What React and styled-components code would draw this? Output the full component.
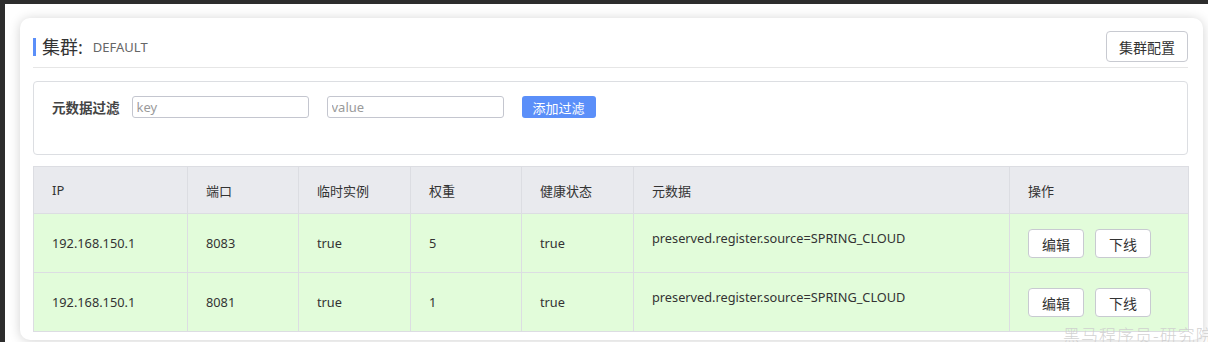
import React from 'react';
import styled, { createGlobalStyle } from 'styled-components';

const GlobalStyle = createGlobalStyle`
  html, body {
    margin: 0;
    padding: 0;
    background: #ffffff;
  }
  body {
    font-family: "Noto Sans", "Noto Sans CJK SC", sans-serif;
    color: #333;
  }
  * {
    box-sizing: border-box;
  }
`;

const instances = [
  { ip: '192.168.150.1', port: 8083, ephemeral: 'true', weight: 5, healthy: 'true', meta: 'preserved.register.source=SPRING_CLOUD' },
  { ip: '192.168.150.1', port: 8081, ephemeral: 'true', weight: 1, healthy: 'true', meta: 'preserved.register.source=SPRING_CLOUD' },
];

const columns = [
  { title: 'IP', width: 154 },
  { title: '端口', width: 111 },
  { title: '临时实例', width: 112 },
  { title: '权重', width: 111 },
  { title: '健康状态', width: 112 },
  { title: '元数据', width: 376 },
  { title: '操作', width: 179 },
];

const Page = styled.div`
  position: relative;
  height: 342px;
  overflow: hidden;
  border-top: 4px solid #2d2d2d;
  border-left: 5px solid #2d2d2d;
  padding: 14px 5px 0 15px;
`;

const Card = styled.div`
  height: 322px;
  background: #fff;
  border-radius: 10px;
  box-shadow: 0 1px 12px rgba(0, 0, 0, 0.18);
  padding: 13px 15px 0 13px;
`;

const Header = styled.div`
  display: flex;
  align-items: center;
  justify-content: space-between;
  padding-bottom: 5px;
  border-bottom: 1px solid #e6e6e6;
`;

const Title = styled.div`
  display: flex;
  align-items: center;
  border-left: 3px solid #5b8ff9;
  padding-left: 6px;
  height: 18px;
`;

const TitleMain = styled.span`
  font-size: 18px;
  line-height: 18px;
  color: #333;
`;

const TitleSub = styled.span`
  font-size: 13px;
  color: #666;
  margin-left: 10px;
`;

const Button = styled.button`
  height: ${(p) => p.$h || 29}px;
  width: ${(p) => p.$w || 56}px;
  padding: 0;
  background: #fff;
  border: 1px solid #c8cad1;
  border-radius: 4px;
  font-family: "Noto Sans", "Noto Sans CJK SC", sans-serif;
  font-size: 14px;
  color: #333;
  cursor: pointer;
`;

const FilterBox = styled.div`
  margin-top: 13px;
  height: 74px;
  border: 1px solid #dcdee2;
  border-radius: 4px;
  padding: 14px 0 0 18px;
`;

const FilterRow = styled.div`
  display: flex;
  align-items: center;
  height: 22px;
`;

const FilterLabel = styled.span`
  font-size: 13.5px;
  font-weight: bold;
  color: #444;
  margin-right: 12px;
`;

const Input = styled.input`
  width: 177px;
  height: 22px;
  border: 1px solid #c4c6cf;
  border-radius: 3px;
  padding: 0 4px;
  margin-right: 18px;
  font-family: "Noto Sans", "Noto Sans CJK SC", sans-serif;
  font-size: 13px;
  color: #333;
  outline: none;
  &::placeholder {
    color: #9a9a9a;
  }
`;

const PrimaryButton = styled.button`
  width: 74px;
  height: 22px;
  padding: 0;
  border: none;
  border-radius: 3px;
  background: #5b8ff9;
  color: #fff;
  font-family: "Noto Sans", "Noto Sans CJK SC", sans-serif;
  font-size: 13px;
  cursor: pointer;
`;

const Table = styled.table`
  margin-top: 11px;
  width: 100%;
  border-collapse: collapse;
  table-layout: fixed;
  font-size: 12.75px;
`;

const Th = styled.th`
  height: 47px;
  background: #e9eaee;
  border: 1px solid #dcdde2;
  text-align: left;
  font-weight: normal;
  font-size: 13px;
  color: #333;
  padding: 0 0 0 18px;
`;

const Td = styled.td`
  height: 59px;
  background: #e2fcda;
  border: 1px solid #dcdde2;
  padding: 0 0 ${(p) => (p.$top ? 10 : 0)}px 18px;
  color: #333;
  vertical-align: middle;
  white-space: nowrap;
`;

const Actions = styled.div`
  display: flex;
  gap: 11px;
  padding-top: 1px;
`;

const Watermark = styled.div`
  position: absolute;
  left: 1058px;
  top: 322px;
  white-space: nowrap;
  font-size: 17px;
  line-height: 18px;
  letter-spacing: 1px;
  color: rgba(205, 205, 205, 0.9);
  font-family: "Noto Sans CJK SC", sans-serif;
  font-weight: 300;
`;

const App = () => (
  <>
    <GlobalStyle />
    <Page>
      <Card>
        <Header>
          <Title>
            <TitleMain>集群:</TitleMain>
            <TitleSub>DEFAULT</TitleSub>
          </Title>
          <Button $w={82} $h={31}>集群配置</Button>
        </Header>
        <FilterBox>
          <FilterRow>
            <FilterLabel>元数据过滤</FilterLabel>
            <Input placeholder="key" />
            <Input placeholder="value" />
            <PrimaryButton>添加过滤</PrimaryButton>
          </FilterRow>
        </FilterBox>
        <Table>
          <colgroup>
            {columns.map((c) => (
              <col key={c.title} style={{ width: c.width }} />
            ))}
          </colgroup>
          <thead>
            <tr>
              {columns.map((c) => (
                <Th key={c.title}>{c.title}</Th>
              ))}
            </tr>
          </thead>
          <tbody>
            {instances.map((row) => (
              <tr key={row.port}>
                <Td>{row.ip}</Td>
                <Td>{row.port}</Td>
                <Td>{row.ephemeral}</Td>
                <Td>{row.weight}</Td>
                <Td>{row.healthy}</Td>
                <Td $top>{row.meta}</Td>
                <Td>
                  <Actions>
                    <Button>编辑</Button>
                    <Button>下线</Button>
                  </Actions>
                </Td>
              </tr>
            ))}
          </tbody>
        </Table>
      </Card>
      <Watermark>黑马程序员-研究院</Watermark>
    </Page>
  </>
);

export default App;
